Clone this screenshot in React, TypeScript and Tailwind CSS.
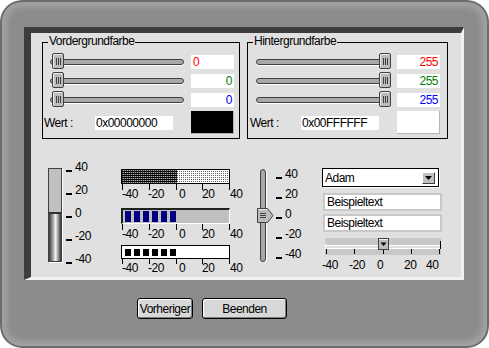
const face = "font-['Liberation_Sans',Arial,sans-serif] tracking-[-0.5px]";

const Grip = () => (
  <div className="flex gap-[1px]">
    <div className="h-[7px] w-[1px] bg-[#404040]" />
    <div className="h-[7px] w-[1px] bg-[#404040]" />
    <div className="h-[7px] w-[1px] bg-[#404040]" />
  </div>
);

function HSlider({ atEnd }: { atEnd?: boolean }) {
  return (
    <div className="relative flex h-[14px] w-[134px] items-center">
      <div className="h-[6px] w-full rounded-[3px] border border-[#404040] bg-[#a8a8a8] shadow-[0_1px_0_#fff]" />
      <div
        className={`absolute top-[-2px] flex h-[16px] w-[12px] items-center justify-center rounded-[2px] border border-[#404040] bg-[#bcbcbc] shadow-[inset_1px_1px_0_#ececec] ${
          atEnd ? "right-[-1px]" : "left-[2px]"
        }`}
      >
        <Grip />
      </div>
    </div>
  );
}

function ValueBox({ value, color, left }: { value: string; color: string; left?: boolean }) {
  return (
    <div className={`h-[14px] w-[43px] bg-white px-[2px] text-[12px] leading-[14px] ${color} ${left ? "text-left" : "text-right"}`}>
      {value}
    </div>
  );
}

interface GroupProps {
  title: string;
  width: string;
  pad: string;
  values: string[];
  firstLeft?: boolean;
  atEnd?: boolean;
  hex: string;
  swatch: string;
}

function Group({ title, width, pad, values, firstLeft, atEnd, hex, swatch }: GroupProps) {
  const colors = ["text-[#ff0000]", "text-[#008000]", "text-[#0000ff]"];
  return (
    <div className={`relative h-[97px] border border-black ${width}`}>
      <span className="absolute left-[5px] top-[-9px] bg-[#e0e0e0] px-[1px] text-[12px] leading-[15px]">{title}</span>
      <div className={`flex flex-col gap-[5px] pt-[12px] ${pad}`}>
        {values.map((v, i) => (
          <div key={i} className="flex h-[14px] items-center justify-between pl-[6px]">
            <HSlider atEnd={atEnd} />
            <ValueBox value={v} color={colors[i]} left={firstLeft && i === 0} />
          </div>
        ))}
        <div className="-mt-[1px] flex h-[23px] items-center">
          <span className="w-[51px] text-[12px] leading-[14px]">Wert :</span>
          <div className="h-[14px] w-[78px] bg-white px-[1px] text-[12px] leading-[14px]">{hex}</div>
          <div className={`ml-auto h-[23px] w-[43px] border-b border-r border-[#b4b4b4] ${swatch}`} />
        </div>
      </div>
    </div>
  );
}

function TickLabels({ items, widths }: { items: string[]; widths: number[] }) {
  return (
    <div className="flex text-[12px] leading-[13px]">
      {items.map((t, i) => (
        <span key={t} className="shrink-0" style={{ width: widths[i] }}>
          {t}
        </span>
      ))}
    </div>
  );
}

const scale = ["-40", "-20", "0", "20", "40"];

function Scale({ tick = "h-[6px]" }: { tick?: string }) {
  return (
    <div>
      <div className={`ml-[1px] flex w-[108px] justify-between ${tick}`}>
        {scale.map((s) => (
          <div key={s} className="h-full w-[1px] bg-black" />
        ))}
      </div>
      <div className="-mt-[2px] ml-[1px]">
        <TickLabels items={scale} widths={[26, 31, 23, 28, 20]} />
      </div>
    </div>
  );
}

function SideLabels({ gap }: { gap: string }) {
  return (
    <div className={`flex flex-col ${gap}`}>
      {["40", "20", "0", "-20", "-40"].map((t) => (
        <div key={t} className="flex h-[14px] items-center">
          <div className="mt-[7px] h-[2px] w-[6px] bg-black" />
          <span className="ml-[3px] text-[12px] leading-[14px]">{t}</span>
        </div>
      ))}
    </div>
  );
}

function Gauge() {
  return (
    <div className="flex">
      <div className="mt-[8px] flex h-[94px] w-[14px] flex-col border border-[#404040] shadow-[1px_1px_0_#fff]">
        <div className="h-[45px] border-b-2 border-[#303030] bg-[#c0c0c0]" />
        <div className="flex-1 bg-[linear-gradient(to_right,#383838,#9a9a9a_30%,#f4f4f4_55%,#8a8a8a_80%,#383838)]" />
      </div>
      <div className="ml-[4px]">
        <SideLabels gap="gap-[9px]" />
      </div>
    </div>
  );
}

function Meters() {
  return (
    <div className="mt-[9px] flex flex-col">
      <div className="flex h-[15px] w-[109px] border border-black">
        <div className="w-[55px] bg-[#000] bg-[conic-gradient(#b0b0b0_0_25%,#000_0_50%,#000_0_75%,#404040_0)] bg-[length:2px_2px]" />
        <div className="flex-1 bg-white bg-[conic-gradient(#fff_0_25%,#fff_0_50%,#606060_0_75%,#fff_0)] bg-[length:2px_2px]" />
      </div>
      <Scale />
      <div className="mt-[7px] flex h-[16px] w-[109px] items-center gap-[3px] border-b border-l-2 border-r border-t-2 border-b-white border-l-[#202020] border-r-white border-t-[#202020] bg-[#c0c0c0] pl-[2px]">
        {[0, 1, 2, 3, 4, 5].map((i) => (
          <div key={i} className="h-[11px] w-[6px] bg-[#000080]" />
        ))}
      </div>
      <Scale />
      <div className="mt-[4px] flex h-[14px] w-[109px] items-center gap-[3px] border border-black bg-white pl-[3px]">
        {[0, 1, 2, 3, 4, 5].map((i) => (
          <div key={i} className="h-[7px] w-[6px] bg-black" />
        ))}
      </div>
      <Scale tick="h-[5px]" />
    </div>
  );
}

function VSlider() {
  return (
    <div className="flex">
      <div className="relative mt-[9px] h-[93px] w-[16px]">
        <div className="ml-[3px] h-full w-[6px] rounded-[3px] border border-[#404040] bg-[#a8a8a8] shadow-[1px_0_0_#fff]" />
        <svg className="absolute left-0 top-[39px]" width="17" height="15" viewBox="0 0 17 15">
          <polygon points="0.5,0.5 10.5,0.5 16,7.5 10.5,14.5 0.5,14.5" fill="#bcbcbc" stroke="#404040" />
          <line x1="1.5" y1="1.5" x2="10" y2="1.5" stroke="#ececec" />
          <line x1="3" y1="5.5" x2="9" y2="5.5" stroke="#404040" />
          <line x1="3" y1="7.5" x2="9" y2="7.5" stroke="#404040" />
          <line x1="3" y1="9.5" x2="9" y2="9.5" stroke="#404040" />
        </svg>
      </div>
      <div className="ml-[3px] mt-[7px]">
        <SideLabels gap="gap-[6px]" />
      </div>
    </div>
  );
}

function RightColumn() {
  return (
    <div className="mt-[8px] flex flex-col text-[12px] leading-[14px]">
      <div className="flex h-[19px] w-[117px] items-center justify-between border border-black bg-white pl-[2px] pr-[3px] shadow-[1px_1px_0_#fff]">
        <span>Adam</span>
        <div className="flex h-[12px] w-[13px] items-center justify-center border border-b-[#404040] border-l-white border-r-[#404040] border-t-white bg-[#c0c0c0]">
          <svg width="7" height="4" viewBox="0 0 7 4">
            <polygon points="0,0 7,0 3.5,4" fill="#000" />
          </svg>
        </div>
      </div>
      <div className="ml-[1px] mt-[6px] flex h-[18px] w-[119px] items-center border-2 border-[#c8c8c8] bg-white pl-[2px]">Beispieltext</div>
      <div className="ml-[1px] mt-[3px] flex h-[18px] w-[119px] items-center border-2 border-[#c8c8c8] bg-white pl-[2px]">Beispieltext</div>
      <div className="relative ml-[3px] mt-[6px] h-[17px] w-[116px] bg-[#c8c8c8]">
        <div className="flex h-[11px] items-end">
          <div className="h-[5px] w-[1px] bg-white" />
          <div className="h-[4px] flex-1 border-b border-t border-white bg-[#e0e0e0]" />
          <div className="h-[8px] w-[1px] bg-black" />
        </div>
        <div className="flex h-[5px] justify-between px-[1px]">
          {scale.map((s) => (
            <div key={s} className="h-full w-[1px] bg-black" />
          ))}
        </div>
        <svg className="absolute left-[53px] top-0" width="11" height="12" viewBox="0 0 11 12">
          <rect x="0.5" y="0.5" width="10" height="11" fill="#bcbcbc" stroke="#404040" />
          <line x1="1" y1="1.5" x2="10" y2="1.5" stroke="#f0f0f0" />
          <polygon points="2.5,4.5 8.5,4.5 5.5,8" fill="#000" />
        </svg>
      </div>
      <div className="mt-[4px]">
        <TickLabels items={scale} widths={[27, 28, 27, 22, 20]} />
      </div>
    </div>
  );
}

function Button({ label, width }: { label: string; width: string }) {
  return (
    <div
      className={`flex h-[21px] items-center justify-center rounded-[3px] border border-black bg-[#d8d8d8] text-[12px] shadow-[inset_1px_1px_0_#fff,inset_-1px_-1px_0_#808080] ${width}`}
    >
      {label}
    </div>
  );
}

export default function App() {
  return (
    <div className={`h-[348px] w-[489px] bg-white text-black ${face}`}>
      <div className="h-full w-full rounded-[22px] bg-[#8c8c8c] bg-[conic-gradient(#939393_0_25%,#888888_0_50%,#8f8f8f_0_75%,#858585_0)] bg-[length:2px_2px] pl-[24px] pt-[27px] shadow-[inset_0_0_0_2px_#6c6c6c,inset_0_0_6px_7px_#a2a2a2,inset_0_-14px_3px_-10px_#a8a8a8]">
        <div className="h-[253px] w-[440px] border-b-[3px] border-l-[7px] border-r-[3px] border-t-[6px] border-b-[#f2f2f2] border-l-[#3c3c3c] border-r-[#f2f2f2] border-t-[#3c3c3c] bg-[#e0e0e0]">
          <div className="flex gap-[7px] pl-[11px] pt-[9px]">
            <Group
              title="Vordergrundfarbe"
              width="w-[198px]"
              pad="pl-[1px] pr-[5px]"
              values={["0", "0", "0"]}
              firstLeft
              hex="0x00000000"
              swatch="bg-black"
            />
            <Group
              title="Hintergrundfarbe"
              width="w-[201px]"
              pad="pl-[2px] pr-[7px]"
              values={["255", "255", "255"]}
              atEnd
              hex="0x00FFFFFF"
              swatch="bg-white"
            />
          </div>
          <div className="mt-[21px] flex items-start pl-[17px]">
            <div className="w-[73px]">
              <Gauge />
            </div>
            <div className="w-[136px]">
              <Meters />
            </div>
            <div className="w-[65px]">
              <VSlider />
            </div>
            <div className="w-[120px]">
              <RightColumn />
            </div>
          </div>
        </div>
        <div className="ml-[113px] mt-[18px] flex gap-[9px]">
          <Button label="Vorheriger" width="w-[56px]" />
          <Button label="Beenden" width="w-[85px]" />
        </div>
      </div>
    </div>
  );
}
